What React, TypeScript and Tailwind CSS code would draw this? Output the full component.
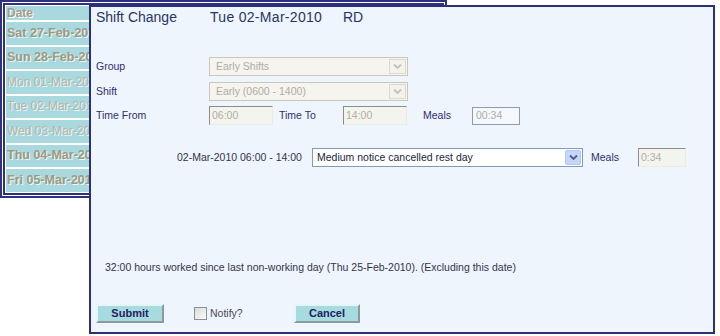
import React from 'react';

const days = [
  { label: 'Sat 27-Feb-2010', bold: true },
  { label: 'Sun 28-Feb-2010', bold: true },
  { label: 'Mon 01-Mar-2010', bold: false },
  { label: 'Tue 02-Mar-2010', bold: false },
  { label: 'Wed 03-Mar-2010', bold: false },
  { label: 'Thu 04-Mar-2010', bold: true },
  { label: 'Fri 05-Mar-2010', bold: true },
];

const Chevron = ({ color }: { color: string }) => (
  <svg width="9" height="7" viewBox="0 0 9 7">
    <path d="M1 1.5 L4.5 5 L8 1.5" fill="none" stroke={color} strokeWidth="1.8" />
  </svg>
);

const DisabledSelect = ({ value }: { value: string }) => (
  <div className="w-[199px] h-[19px] border border-[#cac8bb] bg-[#f5f4ef] flex items-center">
    <span className="flex-1 pl-[6px] text-[#afad9f]">{value}</span>
    <div className="w-[17px] h-[15px] mr-[1px] border border-[#dcdad0] bg-[#f3f2ec] flex items-center justify-center">
      <Chevron color="#c4c2b6" />
    </div>
  </div>
);

const SunkenInput = ({ value, width }: { value: string; width: string }) => (
  <div
    className={`${width} h-[19px] border border-t-[#8c8c88] border-l-[#8c8c88] border-b-[#ecebe4] border-r-[#ecebe4] bg-[#f4f4ef] pl-[2px] flex items-center text-[#b1ae9f]`}
  >
    {value}
  </div>
);

const Button = ({ label, width }: { label: string; width: string }) => (
  <div
    className={`${width} h-[19px] bg-[#a7dbe0] border-2 border-t-[#e6f6f8] border-l-[#e6f6f8] border-b-[#8a9a9c] border-r-[#8a9a9c] flex items-center justify-center font-bold text-[11px] text-[#1d2260]`}
  >
    {label}
  </div>
);

export default function App() {
  return (
    <div className="relative w-[720px] h-[336px] bg-white overflow-hidden text-[10.5px] leading-[13px] font-['Liberation_Sans',Arial,sans-serif]">
      {/* background day list, mostly hidden behind the dialog */}
      <div className="w-[447px] border-[5px] border-double border-[#2e3180] bg-white p-[1px] flex flex-col gap-[2px] text-[12px]">
        <div className="h-[14px] bg-[#a9d8de] pl-[1px] flex items-center font-bold text-[#a49f86] [text-shadow:1px_1px_0_#ffffff]">
          Date
        </div>
        {days.map((d) => (
          <div
            key={d.label}
            className={`h-[22.5px] bg-[#a9d8de] pl-[1px] flex items-center [text-shadow:1px_1px_0_#e8f6f7] ${
              d.bold ? 'font-bold text-[12.5px] text-[#a09a80]' : 'text-[#b9b6a6]'
            }`}
          >
            <span className="w-[82px] overflow-hidden whitespace-nowrap">{d.label}</span>
          </div>
        ))}
      </div>

      {/* dialog */}
      <div className="absolute left-[89px] top-[5px] w-[626px] h-[329px] border-2 border-[#2d3079] bg-[#eef5fc] flex flex-col pl-[5px] text-[#2f306c]">
        <div className="mt-[2px] flex text-[14px] leading-[16px] text-[#2a3464]">
          <span className="w-[114px]">Shift Change</span>
          <span className="w-[133px] tracking-[0.3px]">Tue 02-Mar-2010</span>
          <span>RD</span>
        </div>

        <div className="mt-[32px] flex items-center">
          <span className="w-[113px]">Group</span>
          <DisabledSelect value="Early Shifts" />
        </div>
        <div className="mt-[6px] flex items-center">
          <span className="w-[113px]">Shift</span>
          <DisabledSelect value="Early (0600 - 1400)" />
        </div>
        <div className="mt-[5px] flex items-center">
          <span className="w-[113px]">Time From</span>
          <SunkenInput value="06:00" width="w-[64px]" />
          <span className="ml-[6px] w-[64px]">Time To</span>
          <SunkenInput value="14:00" width="w-[64px]" />
          <span className="ml-[16px] w-[49px]">Meals</span>
          <div className="w-[48px] h-[18px] border border-[#8f9bb6] bg-[#f5f8fc] pl-[3px] flex items-center text-[#b0ad9f]">
            00:34
          </div>
        </div>

        <div className="mt-[23px] flex items-center pl-[81px]">
          <span className="w-[135px] text-[#33344a]">02-Mar-2010 06:00 - 14:00</span>
          <div className="w-[271px] h-[19px] border border-[#7f9db9] bg-white flex items-center">
            <span className="flex-1 pl-[4px] text-[#1e1f3a]">Medium notice cancelled rest day</span>
            <div className="w-[16px] h-[15px] mr-[1px] rounded-[2px] border border-[#b4c7f2] bg-[#c6d6fa] flex items-center justify-center">
              <Chevron color="#4b5d8a" />
            </div>
          </div>
          <span className="ml-[8px] w-[47px]">Meals</span>
          <SunkenInput value="0:34" width="w-[48px]" />
        </div>

        <div className="mt-[93px] pl-[9px] leading-[14px] text-[#33344a]">
          32:00 hours worked since last non-working day (Thu 25-Feb-2010). (Excluding this date)
        </div>

        <div className="mt-[30px] flex items-center">
          <Button label="Submit" width="w-[68px]" />
          <div className="ml-[30px] w-[13px] h-[13px] border border-[#8a8f9c] bg-gradient-to-br from-[#dcdcd8] to-[#fafaf8]" />
          <span className="ml-[3px] w-[84px] text-[#4a4a5c]">Notify?</span>
          <Button label="Cancel" width="w-[66px]" />
        </div>
      </div>
    </div>
  );
}
